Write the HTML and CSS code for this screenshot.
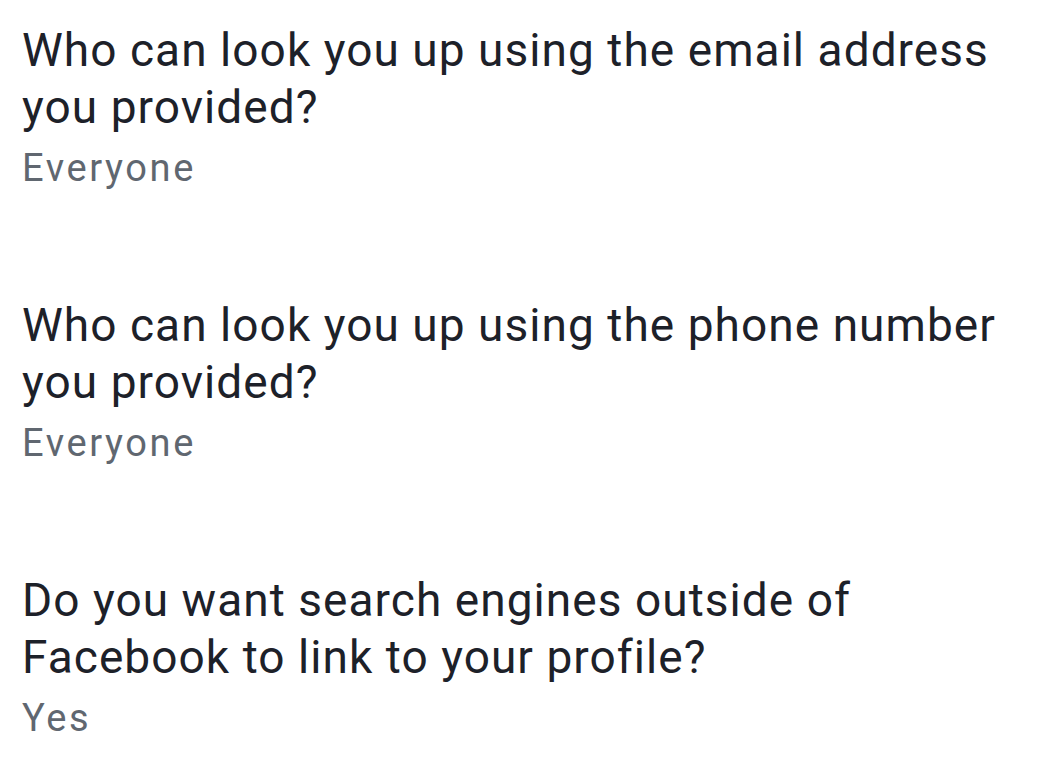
FILE: index.html
```html
<!DOCTYPE html>
<html lang="en">
<head>
  <meta charset="UTF-8" />
  <meta name="viewport" content="width=device-width, initial-scale=1.0"/>
  <title>Privacy Settings</title>
  <link rel="stylesheet" href="styles.css">
</head>
<body>
  <div class="settings-list">

    <!-- Email lookup -->
    <div class="setting-row">
      <div class="setting-title">Who can look you up using the email address you provided?</div>
      <div class="setting-value">Everyone</div>
    </div>

    <!-- Phone lookup -->
    <div class="setting-row">
      <div class="setting-title">Who can look you up using the phone number you provided?</div>
      <div class="setting-value">Everyone</div>
    </div>

    <!-- Search engines -->
    <div class="setting-row">
      <div class="setting-title">Do you want search engines outside of Facebook to link to your profile?</div>
      <div class="setting-value">Yes</div>
    </div>

  </div>
</body>
</html>
```

FILE: styles.css
```css
* {
  box-sizing: border-box;
}

body {
  margin: 0;
  font-family: Roboto, 'Noto Sans', sans-serif;
  background-color: #ffffff;
  color: #1d2129;
}

.settings-list {
  display: flex;
  flex-direction: column;
  gap: 105px;
  padding: 22px 20px 0 22px;
}

.setting-title {
  font-size: 46px;
  line-height: 57px;
  letter-spacing: 1.05px;
  color: #1d2129;
}

.setting-value {
  margin-top: 8px;
  font-size: 38px;
  line-height: 48px;
  letter-spacing: 2.6px;
  color: #606770;
}
```
